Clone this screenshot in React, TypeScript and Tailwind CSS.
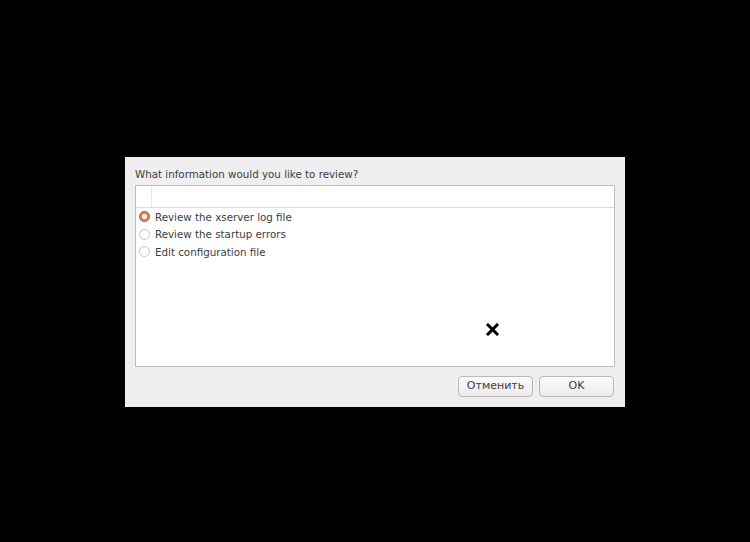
import React from "react";

function Radio({ checked }: { checked?: boolean }) {
  if (checked) {
    return (
      <span className="w-[11px] h-[11px] rounded-full bg-[#e0855a] border border-[#b4552d] flex items-center justify-center shrink-0">
        <span className="w-[5px] h-[5px] rounded-full bg-[#fff2ea]" />
      </span>
    );
  }
  return <span className="w-[11px] h-[11px] rounded-full bg-white border border-[#c4c4c4] shrink-0" />;
}

export default function App() {
  const rows = [
    { label: "Review the xserver log file", checked: true },
    { label: "Review the startup errors" },
    { label: "Edit configuration file" },
  ];
  return (
    <div
      className="w-[750px] h-[542px] bg-black relative pt-[157px] pl-[125px]"
      style={{ fontFamily: '"DejaVu Sans", sans-serif' }}
    >
      <div className="w-[500px] h-[250px] bg-[#efefef] px-[10px] pt-[10px] flex flex-col">
        <div className="text-[10.3px] leading-[14px] text-[#3c3c3c] h-[18px]">
          What information would you like to review?
        </div>
        <div className="w-[480px] h-[182px] border border-[#bdbdbd] bg-white flex flex-col">
          <div className="h-[22px] border-b border-[#dadada] flex">
            <div className="w-[16px] border-r border-[#e6e6e6]" />
          </div>
          <div className="flex flex-col">
            {rows.map((r) => (
              <div key={r.label} className="h-[17.5px] flex items-center pl-[3px] gap-[5px]">
                <Radio checked={r.checked} />
                <span className="text-[10.3px] text-[#3c3c3c] leading-[14px]">{r.label}</span>
              </div>
            ))}
          </div>
        </div>
        <div className="flex justify-end gap-[6px] mt-[9px] pr-px">
          <button className="w-[75px] h-[21px] rounded-[4px] border border-[#b8b8b8] bg-gradient-to-b from-[#fbfbfb] to-[#ececec] text-[11px] text-[#3c3c3c] flex items-center justify-center">
            Отменить
          </button>
          <button className="w-[75px] h-[21px] rounded-[4px] border border-[#b8b8b8] bg-gradient-to-b from-[#fbfbfb] to-[#ececec] text-[11px] text-[#3c3c3c] flex items-center justify-center">
            OK
          </button>
        </div>
      </div>
      <svg className="absolute left-[486px] top-[323px]" width="13" height="13" viewBox="0 0 13 13">
        <path d="M2 2 L11 11 M11 2 L2 11" stroke="#fff" strokeWidth="4.5" strokeLinecap="square" />
        <path d="M2 2 L11 11 M11 2 L2 11" stroke="#000" strokeWidth="3" strokeLinecap="square" />
      </svg>
    </div>
  );
}
